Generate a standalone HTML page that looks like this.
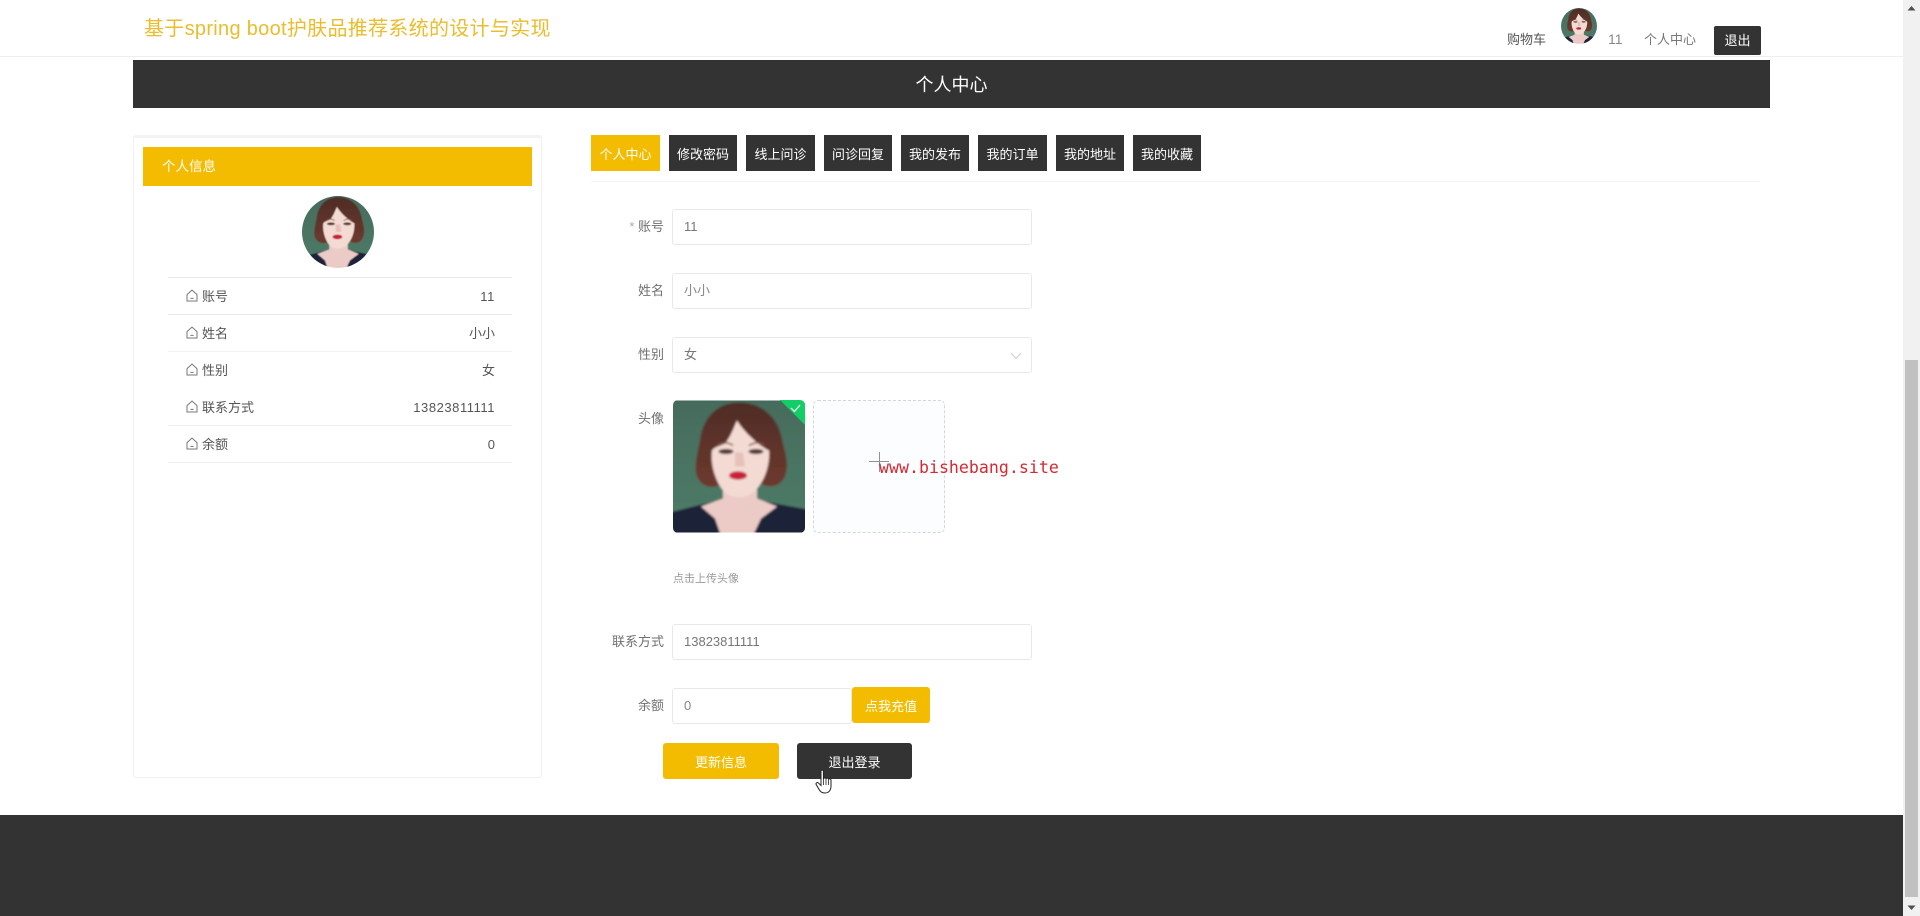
<!DOCTYPE html>
<html lang="zh">
<head>
<meta charset="utf-8">
<title>个人中心</title>
<style>
html,body{margin:0;padding:0;width:1920px;height:916px;overflow:hidden;background:#fff}
body{position:relative;font-family:"Liberation Sans","Noto Sans CJK SC",sans-serif;font-size:13px;color:#666}
.a{position:absolute;box-sizing:border-box}
.t{position:absolute;white-space:nowrap;height:20px;line-height:20px}
.r{text-align:right}
.c{display:flex;align-items:center;justify-content:center;color:#fff;position:absolute;box-sizing:border-box}
.y{background:#f4bc00}
.d{background:#333}
.tab{top:135px;height:36px}
.inp{position:absolute;box-sizing:border-box;left:672px;width:360px;height:36px;border:1px solid #e8e8e8;border-radius:3px;background:#fff}
.line{position:absolute;left:168px;width:344px;height:1px;background:#e8e8e8}
.lab{right:1256px;color:#707070}
.val{left:684px;color:#777}
.ic{position:absolute;left:186px;width:12px;height:13px}
</style>
</head>
<body>
<svg width="0" height="0" style="position:absolute">
  <defs>
    <filter id="b" x="-5%" y="-5%" width="110%" height="110%"><feGaussianBlur stdDeviation="1"/></filter>
    <clipPath id="sq"><rect width="132" height="132"/></clipPath>
    <linearGradient id="bg" x1="0" y1="0" x2="0" y2="1"><stop offset="0" stop-color="#456b5c"/><stop offset="1" stop-color="#4f7d69"/></linearGradient>
    <linearGradient id="hr" x1="0" y1="0" x2="0" y2="1"><stop offset="0" stop-color="#4e2c27"/><stop offset="1" stop-color="#6e3a2e"/></linearGradient>
    <symbol id="face" viewBox="0 0 132 132">
      <g clip-path="url(#sq)">
      <g filter="url(#b)">
        <rect x="-3" y="-3" width="138" height="138" fill="url(#bg)"/>
        <path d="M-3 112 L28 104 L42 101 H92 L108 104 L135 109 V135 H-3Z" fill="#1f2438"/>
        <path d="M50 86 H84 V98 L104 106 L88 118 L80 135 H48 L42 118 L28 106 L50 98Z" fill="#eccbc7"/>
        <path d="M66 2 C42 2 29 20 27 40 C24 54 20 70 25 78 C30 88 42 88 47 84 L90 84 C96 88 108 86 112 76 C117 62 111 50 109 38 C105 18 90 2 66 2Z" fill="url(#hr)"/>
        <path d="M39 50 C42 46 46 46 52 43 C58 36 62 24 64 20 C70 30 84 44 96 50 C97 64 92 82 80 92 C72 98 60 98 52 92 C44 84 37 66 39 50Z" fill="#f3dbd4"/>
        <path d="M62 52 L70 52 L72 66 L62 66Z" fill="#e6c1ba"/>
        <ellipse cx="53" cy="51" rx="7.5" ry="2.6" fill="#573a32"/>
        <ellipse cx="83" cy="51" rx="7.5" ry="2.6" fill="#573a32"/>
        <path d="M44 44 Q53 40 60 45 M76 45 Q84 40 92 44" stroke="#7c4d40" stroke-width="1.5" fill="none"/>
        <ellipse cx="65" cy="75" rx="9" ry="4.2" fill="#c8203a"/>
      </g>
      </g>
    </symbol>
    <symbol id="home" viewBox="0 0 12 13">
      <path d="M1 5.6 L6 1 L11 5.6 V12 H1Z M4.4 9.4 H7.6" fill="none" stroke="#777" stroke-width="1"/>
    </symbol>
  </defs>
</svg>

<!-- header -->
<div class="a" style="left:0;top:56px;width:1903px;height:1px;background:#eee"></div>
<div class="t" style="left:144px;top:17px;height:24px;line-height:24px;font-size:20px;letter-spacing:.3px;color:#e9bd2e">基于spring boot护肤品推荐系统的设计与实现</div>
<div class="t" style="left:1507px;top:30px;color:#555">购物车</div>
<svg class="a" style="left:1561px;top:8px;border-radius:50%" width="36" height="36"><use href="#face" width="36" height="36"/></svg>
<div class="t" style="left:1608px;top:29px;font-size:14px;color:#888">11</div>
<div class="t" style="left:1644px;top:30px;color:#777">个人中心</div>
<div class="c d" style="left:1714px;top:26px;width:47px;height:29px;border-radius:2px;padding-bottom:2px">退出</div>

<!-- title bar -->
<div class="c d" style="left:133px;top:60px;width:1637px;height:48px;font-size:18px">个人中心</div>

<!-- left panel -->
<div class="a" style="left:133px;top:135px;width:409px;height:643px;border:1px solid #f0f0f0;border-top:3px solid #f3f3f3;border-radius:3px"></div>
<div class="a y" style="left:143px;top:147px;width:389px;height:39px"></div>
<div class="t" style="left:162px;top:157px;color:#fff;font-size:13.5px">个人信息</div>
<svg class="a" style="left:302px;top:196px;border-radius:50%" width="72" height="72"><use href="#face" width="72" height="72"/></svg>
<div class="line" style="top:277px"></div>
<div class="line" style="top:314px"></div>
<div class="line" style="top:351px;background:#f4f4f4"></div>
<div class="line" style="top:425px;background:#eee"></div>
<div class="line" style="top:462px;background:#eee"></div>

<svg class="ic" style="top:289px"><use href="#home" width="12" height="13"/></svg>
<svg class="ic" style="top:326px"><use href="#home" width="12" height="13"/></svg>
<svg class="ic" style="top:363px"><use href="#home" width="12" height="13"/></svg>
<svg class="ic" style="top:400px"><use href="#home" width="12" height="13"/></svg>
<svg class="ic" style="top:437px"><use href="#home" width="12" height="13"/></svg>
<div class="t" style="left:202px;top:287px;color:#555">账号</div>
<div class="t" style="left:202px;top:324px;color:#555">姓名</div>
<div class="t" style="left:202px;top:361px;color:#555">性别</div>
<div class="t" style="left:202px;top:398px;color:#555">联系方式</div>
<div class="t" style="left:202px;top:435px;color:#555">余额</div>
<div class="t r" style="right:1425px;top:287px;color:#555;letter-spacing:.6px">11</div>
<div class="t r" style="right:1425px;top:324px;color:#555">小小</div>
<div class="t r" style="right:1425px;top:361px;color:#555">女</div>
<div class="t r" style="right:1425px;top:398px;color:#555;letter-spacing:.55px">13823811111</div>
<div class="t r" style="right:1425px;top:435px;color:#555">0</div>

<!-- tabs -->
<div class="c y tab" style="left:591px;width:69px">个人中心</div>
<div class="c d tab" style="left:669px;width:68px">修改密码</div>
<div class="c d tab" style="left:746px;width:69px">线上问诊</div>
<div class="c d tab" style="left:824px;width:68px">问诊回复</div>
<div class="c d tab" style="left:901px;width:68px">我的发布</div>
<div class="c d tab" style="left:978px;width:69px">我的订单</div>
<div class="c d tab" style="left:1056px;width:68px">我的地址</div>
<div class="c d tab" style="left:1133px;width:68px">我的收藏</div>
<div class="a" style="left:591px;top:181px;width:1169px;height:1px;background:#f4f4f4"></div>

<!-- form -->
<div class="t lab" style="top:217px"><span style="color:#aaa">* </span>账号</div>
<div class="inp" style="top:209px"></div>
<div class="t val" style="top:217px">11</div>

<div class="t lab" style="top:281px">姓名</div>
<div class="inp" style="top:273px"></div>
<div class="t val" style="top:281px;color:#888">小小</div>

<div class="t lab" style="top:345px">性别</div>
<div class="inp" style="top:337px"></div>
<div class="t val" style="top:345px">女</div>
<svg class="a" style="left:1010px;top:352px" width="12" height="8"><path d="M1 1 L6 6.5 L11 1" fill="none" stroke="#ccc" stroke-width="1"/></svg>

<div class="t lab" style="top:409px">头像</div>
<div class="a" style="left:673px;top:400px;width:132px;height:133px;border-radius:5px;overflow:hidden">
  <svg width="132" height="133" style="display:block"><use href="#face" width="132" height="133"/>
    <path d="M107 0 H132 V25Z" fill="#13ce66"/>
    <path d="M118 8 L121.5 11.5 L127 5" fill="none" stroke="#fff" stroke-width="1.2"/>
  </svg>
</div>
<div class="a" style="left:813px;top:400px;width:132px;height:133px;border:1px dashed #d4d6db;border-radius:5px;background:#fbfdff"></div>
<div class="a" style="left:869px;top:461px;width:20px;height:1.4px;background:#8c939d"></div>
<div class="a" style="left:878.5px;top:452px;width:1.4px;height:20px;background:#8c939d"></div>
<div class="t" style="left:879px;top:458px;font-family:'DejaVu Sans Mono','Liberation Mono',monospace;font-size:16.6px;color:#d42a33">www.bishebang.site</div>
<div class="t" style="left:673px;top:569px;font-size:11px;color:#999">点击上传头像</div>

<div class="t lab" style="top:632px">联系方式</div>
<div class="inp" style="top:624px"></div>
<div class="t val" style="left:684px;top:632px">13823811111</div>

<div class="t lab" style="top:696px">余额</div>
<div class="inp" style="top:688px;width:180px"></div>
<div class="t val" style="left:684px;top:696px;color:#888">0</div>
<div class="c y" style="left:852px;top:687px;width:78px;height:36px;border-radius:3px">点我充值</div>

<div class="c y" style="left:663px;top:743px;width:116px;height:36px;border-radius:3px">更新信息</div>
<div class="c d" style="left:797px;top:743px;width:115px;height:36px;border-radius:3px">退出登录</div>

<!-- cursor -->
<svg class="a" style="left:815px;top:769px" width="20" height="25" viewBox="0 0 20 25">
  <path d="M6 2 C6 .8 8.4 .8 8.4 2 V10 C8.6 8.6 11 8.6 11 10 C11.2 8.8 13.5 8.8 13.5 10.4 C13.8 9.4 16 9.6 16 11.2 V17 C16 21 14 24 10 24 C6.5 24 5 22.4 3.5 19.5 L1.2 15.5 C.4 14 2.4 12.8 3.6 14.2 L6 16.5Z" fill="#fff" stroke="#222" stroke-width="1"/>
  <path d="M8.4 10 V16 M11 10 V16 M13.5 10.4 V16" stroke="#222" stroke-width=".8" fill="none"/>
</svg>

<!-- footer -->
<div class="a d" style="left:0;top:815px;width:1903px;height:101px"></div>

<!-- scrollbar -->
<div class="a" style="left:1903px;top:0;width:17px;height:916px;background:#f1f1f1"></div>
<div class="a" style="left:1905px;top:360px;width:13px;height:537px;background:#c1c1c1"></div>
<svg class="a" style="left:1906px;top:4px" width="11" height="8"><path d="M1.5 6.5 L5.5 2 L9.5 6.5Z" fill="#505050"/></svg>
<svg class="a" style="left:1906px;top:904px" width="11" height="8"><path d="M1.5 1.5 L5.5 6 L9.5 1.5Z" fill="#505050"/></svg>
</body>
</html>
